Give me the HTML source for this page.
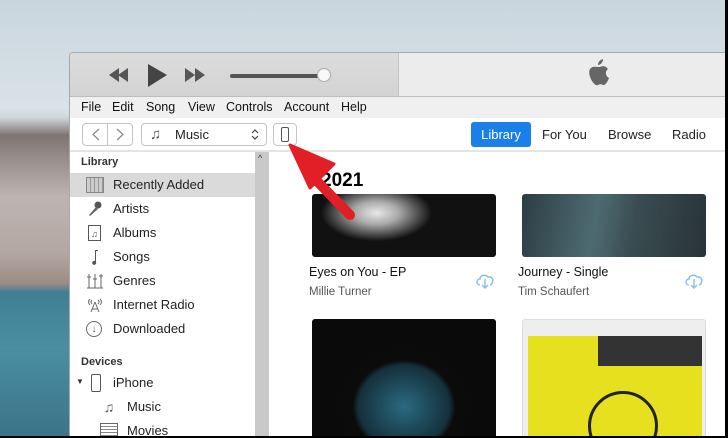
<!DOCTYPE html>
<html><head><style>
*{margin:0;padding:0;box-sizing:border-box}
body{width:728px;height:438px;overflow:hidden;position:relative;font-family:"Liberation Sans",sans-serif;background:#000}
.bg{position:absolute;left:0;top:0;width:725px;height:436px;background:linear-gradient(180deg,#c9d6de 0%,#d9e2e8 25%,#cfd6da 27%,#7e7572 31%,#9a908e 37%,#bdb4b1 45%,#b3a7a2 58%,#9b8c84 65%,#3f7f93 67%,#4b8ea2 80%,#3a7589 100%)}
.win{position:absolute;left:69px;top:52px;width:656px;height:384px;background:#fff;border-left:1px solid #a8a8a8;border-top:1px solid #a8a8a8;border-radius:4px 0 0 0;overflow:hidden}
.player{position:absolute;left:0;top:0;width:656px;height:44px;background:#ececec;border-bottom:1px solid #bdbdbd}
.pl{position:absolute;left:0;top:0;width:329px;height:43px;background:linear-gradient(#dcdcdc,#d3d3d3);border-right:1px solid #c4c4c4}
.menu{position:absolute;left:0;top:44px;width:656px;height:21px;background:#f0f0f0;font-size:12.5px;color:#111}
.menu span{position:absolute;top:3px}
.tb{position:absolute;left:0;top:65px;width:656px;height:34px;background:#fff;border-bottom:2px solid #e4e4e4}
.btn{position:absolute;border:1px solid #c4c4c4;border-radius:4px;background:#fff}
.side{position:absolute;left:0;top:99px;width:185px;height:285px;background:#fff;font-size:13px;color:#222;overflow:hidden}
.scroll{position:absolute;left:185px;top:99px;width:14px;height:285px;background:#c9c9c9}
.side .it{position:absolute;left:0;width:185px;height:24px;line-height:24px;padding-left:43px}
.hd{position:absolute;left:11px;font-size:11px;font-weight:bold;color:#333}
.ic{position:absolute;left:16px;top:4px;width:18px;height:16px;color:#555;font-size:14px;line-height:16px;text-align:center}
.art{position:absolute;border-radius:3px;overflow:hidden}
.t{position:absolute;font-size:12.5px;color:#111}
.a{position:absolute;font-size:11.5px;color:#555}
</style></head><body>
<div class="bg"></div>
<div class="win">
 <div class="player"><div class="pl"></div>
  <svg style="position:absolute;left:38px;top:10px" width="100" height="26"><path d="M1 12L11 5V19ZM10 12L20 5V19Z" fill="#555"/><path d="M40 1L59 12L40 24Z" fill="#444"/><path d="M77 5L87 12L77 19ZM87 5L97 12L87 19Z" fill="#555"/></svg>
  <div style="position:absolute;left:160px;top:21px;width:94px;height:4px;background:#555;border-radius:2px"></div>
  <div style="position:absolute;left:247px;top:15px;width:14px;height:14px;border-radius:50%;background:#f8f8f8;border:1px solid #aaa"></div>
  <svg style="position:absolute;left:518px;top:6px" width="22" height="27" viewBox="0 0 22 27"><path d="M15 0C15 3 13 6 10 6C10 3 12 1 15 0ZM11 8C13 8 15 6.5 17 7.5C19 8.5 20 10 20 10C17 12 17 17 21 19C20 22 17 27 15 26C13 25 12 25 10 26C8 27 6 25 4 22C1 17 0 11 3 9C5 7 8 8 11 8Z" fill="#666"/></svg>
 </div>
 <div class="menu"><span style="left:11px">File</span><span style="left:42px">Edit</span><span style="left:76px">Song</span><span style="left:118px">View</span><span style="left:156px">Controls</span><span style="left:214px">Account</span><span style="left:271px">Help</span></div>
 <div class="tb">
  <div class="btn" style="left:12px;top:5px;width:26px;height:23px;border-radius:4px 0 0 4px"></div>
  <div class="btn" style="left:37px;top:5px;width:26px;height:23px;border-radius:0 4px 4px 0"></div>
  <svg style="position:absolute;left:12px;top:5px" width="52" height="23"><path d="M17 6L11 11.5L17 17M35 6L41 11.5L35 17" stroke="#888" fill="none" stroke-width="1.2"/></svg>
  <div class="btn" style="left:71px;top:5px;width:126px;height:23px"></div>
  <span style="position:absolute;left:80px;top:8px;font-size:15px;color:#555">♫</span>
  <span style="position:absolute;left:105px;top:9px;font-size:13px;color:#222">Music</span>
  <svg style="position:absolute;left:180px;top:9px" width="10" height="15"><path d="M2 6L5 3L8 6M2 9L5 12L8 9" stroke="#444" fill="none" stroke-width="1.2"/></svg>
  <div class="btn" style="left:203px;top:5px;width:24px;height:23px"></div>
  <div style="position:absolute;left:211px;top:9px;width:8px;height:15px;border:1px solid #555;border-radius:2px"></div>
  <div style="position:absolute;left:401px;top:4px;width:60px;height:25px;background:#1a7fe8;border-radius:3px;color:#fff;font-size:13px;text-align:center;line-height:25px">Library</div>
  <span style="position:absolute;left:472px;top:9px;font-size:13px;color:#222">For You</span>
  <span style="position:absolute;left:538px;top:9px;font-size:13px;color:#222">Browse</span>
  <span style="position:absolute;left:602px;top:9px;font-size:13px;color:#222">Radio</span>
 </div>
 <div class="side">
  <div class="hd" style="top:4px">Library</div>
  <div class="it" style="top:21px;background:#dadada"><div class="ic" style="border:1px solid #888;background:repeating-linear-gradient(90deg,#ccc 0 3px,#999 3px 4px)"></div>Recently Added</div>
  <div class="it" style="top:45px"><svg class="ic" viewBox="0 0 18 16"><circle cx="12" cy="4" r="3.5" fill="#555"/><path d="M10 6L3 14L4 15L12 8" fill="#666"/></svg>Artists</div>
  <div class="it" style="top:69px"><div class="ic" style="border:1px solid #555;width:13px;left:18px;font-size:9px">♫</div>Albums</div>
  <div class="it" style="top:93px"><svg class="ic" viewBox="0 0 18 16"><path d="M9 1H12V2H10V13A2 2 0 1 1 9 12Z" fill="#555"/></svg>Songs</div>
  <div class="it" style="top:117px"><svg class="ic" viewBox="0 0 18 16"><path d="M3 1V15M9 1V15M15 1V15M1 4H5M7 6H11M13 3H17M1 15H17" stroke="#666" fill="none"/></svg>Genres</div>
  <div class="it" style="top:141px"><svg class="ic" viewBox="0 0 18 16"><path d="M9 5L5 15M9 5L13 15M6 12H12M4 2Q1 5 4 8M14 2Q17 5 14 8M6 3Q4 5 6 7M12 3Q14 5 12 7" stroke="#666" fill="none"/></svg>Internet Radio</div>
  <div class="it" style="top:165px"><div class="ic" style="border:1px solid #666;border-radius:50%;width:16px;font-size:10px">↓</div>Downloaded</div>
  <div class="hd" style="top:204px">Devices</div>
  <span style="position:absolute;left:6px;top:225px;font-size:8px;color:#333">▼</span>
  <div style="position:absolute;left:21px;top:222px;width:10px;height:18px;border:1px solid #555;border-radius:2px"></div>
  <div class="it" style="top:219px">iPhone</div>
  <div class="it" style="top:243px;padding-left:57px"><div class="ic" style="left:30px">♫</div>Music</div>
  <div class="it" style="top:267px;padding-left:57px"><div class="ic" style="left:30px;border:1px solid #666;background:repeating-linear-gradient(#fff 0 2px,#888 2px 3px)"></div>Movies</div>
 </div>
 <div class="scroll"><span style="position:absolute;left:3px;top:1px;font-size:9px;color:#333">^</span></div>
 <div style="position:absolute;left:199px;top:99px;width:457px;height:285px;background:#fff;overflow:hidden">
  <div style="position:absolute;left:52px;top:18px;font-size:19px;font-weight:bold">2021</div>
  <div class="art" style="left:43px;top:42px;width:184px;height:63px;background:radial-gradient(ellipse 30% 45% at 35% 30%,#e8e8e8 0,#aaa 40%,#111 100%),#000"></div>
  <div class="art" style="left:253px;top:42px;width:184px;height:63px;background:linear-gradient(100deg,#2c3d44,#4e6b72 40%,#3a4d52 60%,#283339)"></div>
  <div class="t" style="left:40px;top:113px">Eyes on You - EP</div>
  <div class="a" style="left:40px;top:134px">Millie Turner</div>
  <div class="t" style="left:249px;top:113px">Journey - Single</div>
  <div class="a" style="left:249px;top:134px">Tim Schaufert</div>
  <svg style="position:absolute;left:206px;top:120px" width="20" height="18"><path d="M5 13C1 13 1 7 5 7C5 3 11 2 13 5C17 4 19 8 17 11C17 12 16 13 15 13M10 7V16M7 13L10 16L13 13" stroke="#8cc0ec" fill="none" stroke-width="1.5"/></svg>
  <svg style="position:absolute;left:415px;top:120px" width="20" height="18"><path d="M5 13C1 13 1 7 5 7C5 3 11 2 13 5C17 4 19 8 17 11C17 12 16 13 15 13M10 7V16M7 13L10 16L13 13" stroke="#8cc0ec" fill="none" stroke-width="1.5"/></svg>
  <div class="art" style="left:43px;top:167px;width:184px;height:125px;background:radial-gradient(ellipse 45% 60% at 50% 70%,#2a6a80 0,#15303c 55%,#0b0b0b 62%,#0a0a0a 100%)"></div>
  <div class="art" style="left:253px;top:167px;width:184px;height:125px;background:#eeeeee;border:1px solid #ddd"><div style="position:absolute;left:5px;top:16px;width:174px;height:110px;background:#e7e01e"><div style="position:absolute;left:70px;top:0;width:104px;height:30px;background:#333"></div><div style="position:absolute;left:60px;top:55px;width:70px;height:70px;border:3px solid #222;border-radius:50%"></div></div></div>
 </div>
</div>
<svg style="position:absolute;left:0;top:0" width="728" height="438"><path d="M350 215L313 177" stroke="#e21f26" stroke-width="10" stroke-linecap="round"/><path d="M290 145L334 164L310 188Z" fill="#e21f26" stroke="#e21f26" stroke-width="3" stroke-linejoin="round"/></svg>
</body></html>
